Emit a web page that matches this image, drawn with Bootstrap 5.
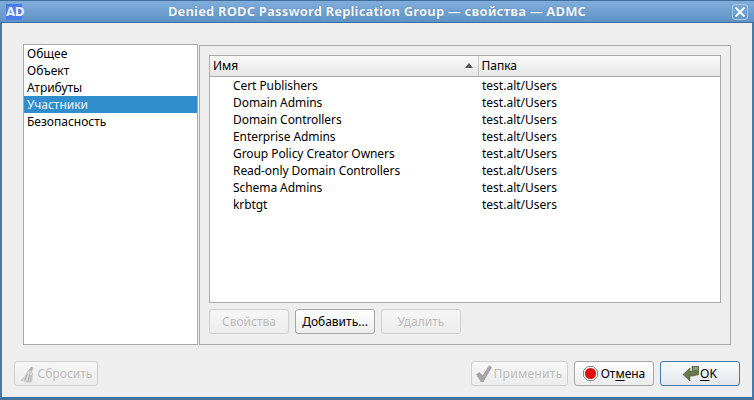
<!DOCTYPE html>
<html lang="ru"><head><meta charset="utf-8"><title>ADMC</title>
<link rel="stylesheet" href="https://cdn.jsdelivr.net/npm/bootstrap@5.3.0/dist/css/bootstrap.min.css">
<style>
html,body{margin:0;height:400px;overflow:hidden;background:#eee}
body{font-family:"Noto Sans",sans-serif;font-size:12px;line-height:17px;color:#000}
.win{width:754px;height:400px;border:2px solid #4a79a8;border-top:0;border-bottom-width:3px;border-bottom-color:#44709c;background:#eee}
.tbar{height:23px;margin:0 -2px;background:linear-gradient(#80aedb,#5f92c6);border-top:1px solid #3f6d9c;border-bottom:1px solid #3e6d9d;color:#f2f6fa;font-weight:700;font-size:13px;padding:0 6px;letter-spacing:.16px}
.tbar-t{flex:1;text-align:center;text-shadow:0 0 1px #3d6a96}
.logo{width:16px;height:16px;background:#4a7bea;color:#e8eefc;font:700 13px/16px "DejaVu Sans Condensed","DejaVu Sans",sans-serif;text-align:center;letter-spacing:-.3px}
.xbtn{width:16px;height:16px;border:1px solid #a8c8e6;border-radius:3px}
.main{height:301px;margin:21px 21px 0}
.side{width:175px;height:301px;background:#fff;border:1px solid #aaa;flex:none;border-radius:0}
.side .list-group-item{border:0;margin:0;padding:0 3px;height:17px;line-height:17px;background:transparent;color:#000;font-size:12px;border-radius:0}
.side .list-group-item.active{background:#2f8ecb;color:#f0f6fb;margin-top:0}
.pane{width:532px;height:300px;margin-left:1px;margin-top:1px;border:1px solid #aaa;padding:9px;flex:none}
.tbox{width:512px;height:248px;border:1px solid #aaa;background:#fff;flex:none;overflow:hidden}
.tbox table{width:100%;table-layout:fixed;border-collapse:collapse;margin:0}
.tbox th{height:20px;padding:0 3px;font-weight:400;line-height:16px;background:linear-gradient(#fafafa,#e6e6e6);border-bottom:1px solid #aaa;vertical-align:middle;position:relative}
.tbox th:first-child{width:268px;border-right:1px solid #c4c4c4}
.tbox td{height:17px;padding:0 3px;line-height:17px;border:0}
.tbox td:first-child{padding-left:23px;letter-spacing:-.07px}
.tbox td:last-child{padding-left:4px}
.sortm{position:absolute;right:5px;top:7px;width:0;height:0;border-left:4px solid transparent;border-right:4px solid transparent;border-bottom:5px solid #555}
.qb{height:25px;width:80px;padding:0;font-size:12px;line-height:17px;color:#000;background:linear-gradient(#fff,#ececec);border:1px solid #a6a6a6;border-radius:3px}
.qb:disabled{color:#bdbdbd;border-color:#cfcfcf;background:linear-gradient(#f6f6f6,#ececec);opacity:1}
.qb:hover{color:#000}
.qb.dflt{border-color:#3f7ba6;background:linear-gradient(#f7fafc,#e4e8ec)}
.qb svg{flex:none}
.qb u{text-underline-offset:2px}
.w84{width:84px;gap:2px}
.w97{width:97px;gap:1px;letter-spacing:.3px}
.gap3{gap:3px}
.gap1px{gap:1px}
.rowb{margin-top:6px;gap:6px}
.foot{margin:16px 12px 0;gap:6px}
.spring{flex:1}
</style></head><body>
<div class="win d-flex flex-column">
  <div class="tbar d-flex align-items-center">
    <div class="logo">AD</div>
    <div class="tbar-t">Denied RODC Password Replication Group — свойства — ADMC</div>
    <div class="xbtn d-flex align-items-center justify-content-center"><svg width="12" height="12" viewBox="0 0 12 12"><path d="M1.500 1.500l9 9M10.500 1.500l-9 9" stroke="#f4f8fc" stroke-width="2" fill="none"/></svg></div>
  </div>
  <div class="main d-flex">
    <div class="side list-group">
      <a class="list-group-item">Общее</a>
      <a class="list-group-item">Объект</a>
      <a class="list-group-item">Атрибуты</a>
      <a class="list-group-item active">Участники</a>
      <a class="list-group-item">Безопасность</a>
    </div>
    <div class="pane d-flex flex-column">
      <div class="tbox">
        <table class="table-borderless">
          <thead><tr><th>Имя<span class="sortm"></span></th><th>Папка</th></tr></thead>
          <tbody>
            <tr><td>Cert Publishers</td><td>test.alt/Users</td></tr>
            <tr><td>Domain Admins</td><td>test.alt/Users</td></tr>
            <tr><td>Domain Controllers</td><td>test.alt/Users</td></tr>
            <tr><td>Enterprise Admins</td><td>test.alt/Users</td></tr>
            <tr><td>Group Policy Creator Owners</td><td>test.alt/Users</td></tr>
            <tr><td>Read-only Domain Controllers</td><td>test.alt/Users</td></tr>
            <tr><td>Schema Admins</td><td>test.alt/Users</td></tr>
            <tr><td>krbtgt</td><td>test.alt/Users</td></tr>
          </tbody>
        </table>
      </div>
      <div class="d-flex rowb">
        <button class="btn qb" disabled>Свойства</button>
        <button class="btn qb">Добавить...</button>
        <button class="btn qb" disabled>Удалить</button>
      </div>
    </div>
  </div>
  <div class="d-flex foot">
    <button class="btn qb w84 d-flex align-items-center justify-content-center" disabled>
      <svg width="16" height="18" viewBox="0 0 16 18"><path d="M11 1.500l2.500 1.500-2 4-3-1.700z" fill="#b5b5b5"/><path d="M8 5.500l4.500 2.500c0 3.500-.5 6-1 9-3.500.5-7.500 0-10.500-2 3-2 5-5 7-9.500z" fill="#d4d4d4" stroke="#bdbdbd" stroke-width=".6"/><path d="M7.500 9l-3 6.500M9.500 9.500l-1.500 7M11 10l-.5 6.500" stroke="#a8a8a8" stroke-width=".8"/></svg>Сбросить</button>
    <div class="spring"></div>
    <button class="btn qb w97 d-flex align-items-center justify-content-center" disabled>
      <svg width="16" height="17" viewBox="0 0 16 17"><path d="M0 9.500l3.500-2.500 3 3.500L13 .5l3 1.500L7.500 17H5z" fill="#a4a4a4"/></svg>Применить</button>
    <button class="btn qb d-flex align-items-center justify-content-center gap3">
      <svg width="15" height="15" viewBox="0 0 15 15"><path d="M4.500.5h6l4 4v6l-4 4h-6l-4-4v-6z" fill="#ececec" stroke="#8a8a8a"/><circle cx="7.500" cy="7.500" r="5.500" fill="#e00f0f"/></svg><span>От<u>м</u>ена</span></button>
    <button class="btn qb dflt d-flex align-items-center justify-content-center gap1px">
      <svg width="16" height="15" viewBox="0 0 16 15"><path d="M0 8.500L7 2v3.500h2V0h7v8.500l-6 1.500H7v5z" fill="#66784e" stroke="#4d5a38" stroke-width=".6"/><path d="M10 1h5v3h-5z" fill="#8d9c74"/></svg><span><u>O</u>K</span></button>
  </div>
</div>
</body></html>
